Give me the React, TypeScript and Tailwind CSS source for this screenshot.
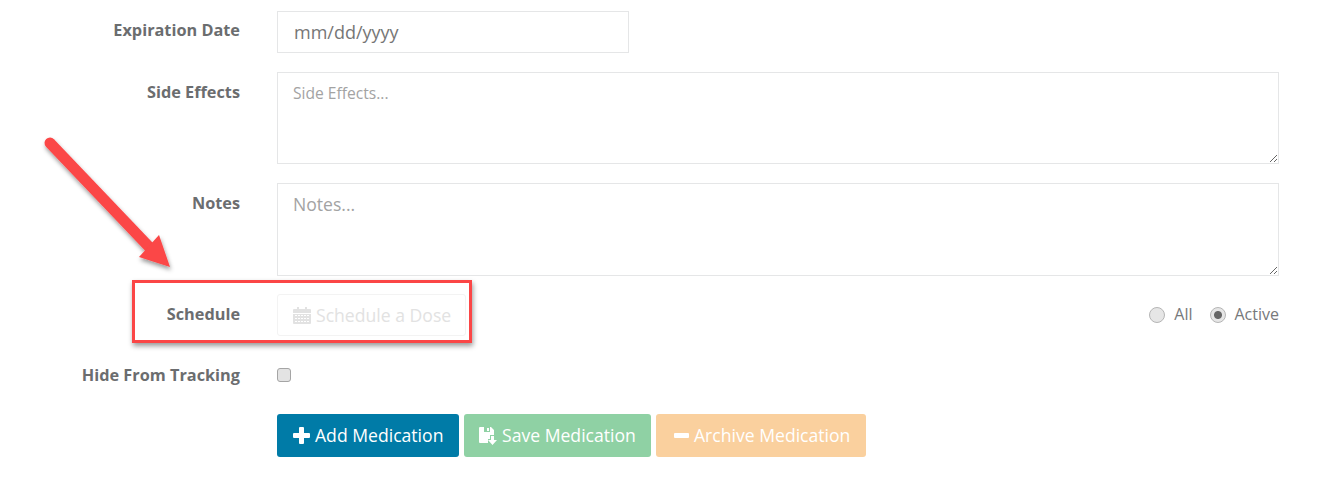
import React from 'react';

const PlusIcon: React.FC = () => (
  <svg width="17" height="17" viewBox="0 0 17 17" className="mr-[5px] shrink-0" fill="currentColor">
    <path d="M7 0h3a1 1 0 0 1 1 1v5h5a1 1 0 0 1 1 1v3a1 1 0 0 1-1 1h-5v5a1 1 0 0 1-1 1H7a1 1 0 0 1-1-1v-5H1a1 1 0 0 1-1-1V7a1 1 0 0 1 1-1h5V1a1 1 0 0 1 1-1z" />
  </svg>
);

const MinusIcon: React.FC = () => (
  <svg width="15" height="5" viewBox="0 0 15 5" className="mr-[5px] shrink-0" fill="currentColor">
    <rect width="15" height="5" rx="1" />
  </svg>
);

const SaveDownIcon: React.FC = () => (
  <svg width="18" height="18" viewBox="0 0 18 18" className="mr-[5px] shrink-0" fill="currentColor">
    <path fillRule="evenodd" d="M1 0h11l3 3v5h-4v4H9v4H1a1 1 0 0 1-1-1V1a1 1 0 0 1 1-1zM5 0v5h6V0zM8 1h2v3H8z" />
    <path d="M12 9h3v4h3l-4.5 5L9 13h3z" />
  </svg>
);

// dots of the month grid, cut out of the calendar body
const calendarDots = [8, 11, 14]
  .flatMap(y => [2, 5, 8, 11, 14].map(x => `M${x} ${y}h2v1h-2z`))
  .join('');

const CalendarIcon: React.FC = () => (
  <svg width="18" height="17" viewBox="0 0 18 17" className="mr-[5px] shrink-0" fill="currentColor">
    <path d="M4 0h2v2h6V0h2v2h3a1 1 0 0 1 1 1v3H0V3a1 1 0 0 1 1-1h3z" />
    <path fillRule="evenodd" d={`M0 7h18v9a1 1 0 0 1-1 1H1a1 1 0 0 1-1-1z${calendarDots}`} />
  </svg>
);

const FieldRow: React.FC<{ label: string; className?: string; labelClass?: string; children: React.ReactNode }> = ({
  label,
  className = '',
  labelClass = 'pt-[10px]',
  children,
}) => (
  <div className={`flex ${className}`}>
    <label className={`w-[240px] shrink-0 text-right text-[16.3px] leading-5 font-bold text-[#6b6d6f] ${labelClass}`}>{label}</label>
    <div className="ml-[37px] w-[1002px]">{children}</div>
  </div>
);

const App: React.FC = () => {
  return (
    <div className="relative h-[494px] w-[1328px] overflow-hidden bg-white pt-[11px] font-['Open_Sans',sans-serif] text-[#676a6c]">
      <FieldRow label="Expiration Date" labelClass="pt-[9px]">
        <div className="flex h-[42px] w-[352px] items-center border border-[#e5e6e7] pl-[16px] text-[18px] text-[#767676]">mm/dd/yyyy</div>
      </FieldRow>

      <FieldRow label="Side Effects" className="mt-[19px]">
        <textarea
          placeholder="Side Effects..."
          className="block h-[92px] w-full border border-[#e5e6e7] px-[15px] py-[8px] text-[15.6px] leading-6 outline-none placeholder:text-[#a3a3a3]"
        />
      </FieldRow>

      <FieldRow label="Notes" className="mt-[19px]">
        <textarea
          placeholder="Notes..."
          className="block h-[93px] w-full border border-[#e5e6e7] px-[15px] py-[8px] text-[17.6px] leading-6 outline-none placeholder:text-[#a3a3a3]"
        />
      </FieldRow>

      <FieldRow label="Schedule" className="mt-[18px]">
        <div className="flex items-center justify-between">
          <button className="flex h-[42px] w-[189px] items-center rounded-[3px] border border-[#f3f3f3] pl-[15px] text-[17.6px] text-[#e2e2e2]">
            <CalendarIcon />
            Schedule a Dose
          </button>
          <div className="flex items-center text-[16px] text-[#77797b]">
            <input
              type="radio"
              name="filter"
              className="h-[16px] w-[16px] appearance-none rounded-full border border-[#b5b5b5] bg-[#e6e6e6]"
            />
            <span className="mb-[2px] ml-[9px]">All</span>
            <input
              type="radio"
              name="filter"
              defaultChecked
              className="ml-[17px] h-[16px] w-[16px] appearance-none rounded-full border border-[#b5b5b5] bg-[radial-gradient(circle,#666_3.5px,#e6e6e6_4.5px)]"
            />
            <span className="mb-[2px] ml-[9px]">Active</span>
          </div>
        </div>
      </FieldRow>

      <FieldRow label="Hide From Tracking" className="mt-[29px]" labelClass="">
        <div className="flex h-5 items-center">
          <input type="checkbox" className="h-[14px] w-[14px] appearance-none rounded-[3px] border border-[#a5a5a5] bg-[#e3e3e3]" />
        </div>
      </FieldRow>

      <div className="mt-[29px] ml-[277px] flex gap-[5px] text-[17.6px] text-white">
        <button className="flex h-[43px] w-[182px] items-center rounded-[3px] bg-[#007ba7] pl-[16px]">
          <PlusIcon />
          Add Medication
        </button>
        <button className="flex h-[43px] w-[187px] items-center rounded-[3px] bg-[#8fd1a4] pl-[15px]">
          <SaveDownIcon />
          Save Medication
        </button>
        <button className="flex h-[43px] w-[210px] items-center rounded-[3px] bg-[#fad09e] pl-[18px]">
          <MinusIcon />
          Archive Medication
        </button>
      </div>

      {/* annotation drawn on top of the form */}
      <div className="absolute top-[280px] left-[132px] h-[63px] w-[340px] border-[3px] border-[#fb4646] shadow-[1px_3px_5px_rgba(0,0,0,0.4)]" />
      <svg className="absolute top-[130px] left-[35px]" width="150" height="150" viewBox="0 0 150 150">
        <defs>
          <filter id="arrowShadow" x="-20%" y="-20%" width="140%" height="140%">
            <feDropShadow dx="1" dy="3" stdDeviation="2" floodColor="#000" floodOpacity="0.4" />
          </filter>
        </defs>
        <g filter="url(#arrowShadow)" fill="#fb4646">
          <path d="M15 13L118 121" stroke="#fb4646" strokeWidth="11" strokeLinecap="round" />
          <path d="M124 105L135 137L104 127Z" />
        </g>
      </svg>
    </div>
  );
};

export default App;
